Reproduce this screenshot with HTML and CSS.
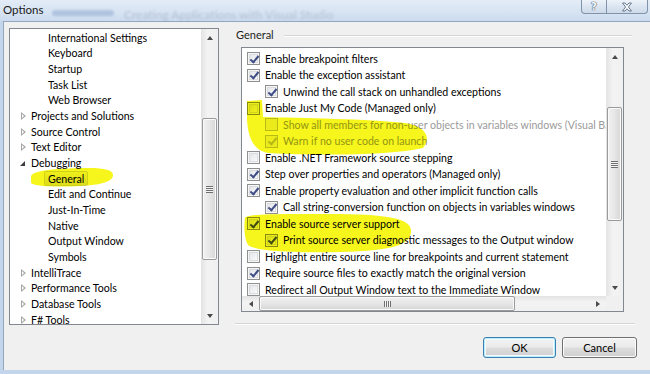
FILE: index.html
```html
<!DOCTYPE html>
<html>
<head>
<meta charset="utf-8">
<link rel="stylesheet" href="styles.css">
</head>
<body>
<div class="window">
  <div class="titlebar">
    <span class="title">Options</span>
    <span class="ghost ghost-icon"></span>
    <span class="ghost ghost-text">Creating Applications with Visual Studio</span>
    <div class="caption-btns">
      <div class="cap cap-help">?</div>
      <div class="cap cap-close">
        <svg width="12" height="10" viewBox="0 0 12 10"><path d="M1.5 1 H4 L6 3.2 L8 1 H10.5 L7.4 5 L10.5 9 H8 L6 6.8 L4 9 H1.5 L4.6 5 Z" fill="#fafcff" stroke="#5b6c82" stroke-width="0.9" stroke-linejoin="round"/></svg>
      </div>
    </div>
  </div>
  <div class="client">
    <div class="main">
      <div class="tree">
        <div class="tree-list">
          <div class="node l2">International Settings</div>
          <div class="node l2">Keyboard</div>
          <div class="node l2">Startup</div>
          <div class="node l2">Task List</div>
          <div class="node l2">Web Browser</div>
          <div class="node l1"><span class="exp closed"></span>Projects and Solutions</div>
          <div class="node l1"><span class="exp closed"></span>Source Control</div>
          <div class="node l1"><span class="exp closed"></span>Text Editor</div>
          <div class="node l1"><span class="exp open"></span>Debugging</div>
          <div class="node l2"><span class="sel">General</span></div>
          <div class="node l2">Edit and Continue</div>
          <div class="node l2">Just-In-Time</div>
          <div class="node l2">Native</div>
          <div class="node l2">Output Window</div>
          <div class="node l2">Symbols</div>
          <div class="node l1"><span class="exp closed"></span>IntelliTrace</div>
          <div class="node l1"><span class="exp closed"></span>Performance Tools</div>
          <div class="node l1"><span class="exp closed"></span>Database Tools</div>
          <div class="node l1"><span class="exp closed"></span>F# Tools</div>
        </div>
        <div class="vscroll">
          <div class="arrow-btn"><span class="tri up"></span></div>
          <div class="track"><div class="thumb tree-thumb"><span class="grip"></span></div></div>
          <div class="arrow-btn"><span class="tri down"></span></div>
        </div>
      </div>
      <div class="page">
        <div class="page-head"><span class="page-title">General</span><span class="page-rule"></span></div>
        <div class="optbox">
          <div class="opts">
            <div class="opt"><span class="cb on"></span>Enable breakpoint filters</div>
            <div class="opt"><span class="cb on"></span>Enable the exception assistant</div>
            <div class="opt sub"><span class="cb on"></span>Unwind the call stack on unhandled exceptions</div>
            <div class="opt"><span class="cb"></span>Enable Just My Code (Managed only)</div>
            <div class="opt sub dis"><span class="cb"></span>Show all members for non-user objects in variables windows (Visual Basic only)</div>
            <div class="opt sub dis"><span class="cb on"></span>Warn if no user code on launch</div>
            <div class="opt"><span class="cb"></span>Enable .NET Framework source stepping</div>
            <div class="opt"><span class="cb on"></span>Step over properties and operators (Managed only)</div>
            <div class="opt"><span class="cb on"></span>Enable property evaluation and other implicit function calls</div>
            <div class="opt sub"><span class="cb on"></span>Call string-conversion function on objects in variables windows</div>
            <div class="opt"><span class="cb on"></span>Enable source server support</div>
            <div class="opt sub"><span class="cb on"></span>Print source server diagnostic messages to the Output window</div>
            <div class="opt"><span class="cb"></span>Highlight entire source line for breakpoints and current statement</div>
            <div class="opt"><span class="cb on"></span>Require source files to exactly match the original version</div>
            <div class="opt"><span class="cb"></span>Redirect all Output Window text to the Immediate Window</div>
          </div>
          <div class="vscroll">
            <div class="arrow-btn"><span class="tri up"></span></div>
            <div class="track"><div class="thumb opt-thumb"><span class="grip"></span></div></div>
            <div class="arrow-btn"><span class="tri down"></span></div>
          </div>
          <div class="hscroll">
            <div class="arrow-btn h"><span class="tri left"></span></div>
            <div class="htrack"><div class="hthumb"><span class="hgrip"></span></div></div>
            <div class="arrow-btn h"><span class="tri right"></span></div>
          </div>
          <div class="corner"></div>
        </div>
        <div class="sep"></div>
      </div>
    </div>
    <div class="buttons">
      <div class="btn default">OK</div>
      <div class="btn cancel">Cancel</div>
    </div>
  </div>
</div>
<svg class="marker" width="650" height="374" viewBox="0 0 650 374">
  <path d="M31 176 C33 170 60 168 90 168 C104 168 113 170 113 175 C113 182 100 185 80 186 C60 187 36 187 31 183 Z" fill="#f6f61c"/>
  <path d="M247 101 L262 100 L263 117 C300 118 370 119 405 123 C428 127 431 139 423 148 C395 155 320 156 268 153 C252 150 248 135 247 120 Z" fill="#f6f61c"/>
  <path d="M245 218 C246 214 270 214 330 214 C385 214 410 218 411 230 C412 244 395 251 340 252 C290 253 255 251 248 245 C244 238 244 226 245 218 Z" fill="#f6f61c"/>
</svg>
</body>
</html>
```
FILE: styles.css
```css
* { box-sizing: border-box; }
html, body { margin: 0; padding: 0; }
body {
  width: 650px;
  height: 374px;
  overflow: hidden;
  background: #c3d5ea;
  font-family: Lato, "Noto Sans", sans-serif;
  font-size: 10.6px;
  color: #000;
}
.window { display: flex; flex-direction: column; height: 374px; }

.titlebar {
  position: relative;
  height: 21px;
  display: flex;
  align-items: flex-start;
  background: linear-gradient(to bottom, #e3ecf7 0%, #d6e3f2 60%, #cbdbee 100%);
}
.title { padding: 2px 0 0 3px; font-size: 11.5px; color: #1a1a1a; line-height: 16px; }
.ghost { position: absolute; filter: blur(1.3px); opacity: 0.3; }
.ghost-icon { left: 52px; top: 10px; width: 62px; height: 6px; background: #5a7fb6; border-radius: 3px; }
.ghost-text { left: 124px; top: 7px; font-size: 12px; color: #6a7788; white-space: nowrap; }
.caption-btns {
  margin-left: auto;
  margin-right: 2px;
  display: flex;
  height: 14px;
  border: 1px solid #8193ab;
  border-top: none;
  border-radius: 0 0 4px 4px;
  background: linear-gradient(to bottom, #eef3f9 0%, #dbe5f1 50%, #cfdbea 100%);
  overflow: hidden;
}
.cap { display: flex; align-items: center; justify-content: center; height: 13px; }
.cap-help {
  width: 25px;
  border-right: 1px solid #8193ab;
  font-size: 10px;
  font-weight: bold;
  color: #f8fbff;
  text-shadow: 0 0 1px #4b5c73, 0 0 1px #4b5c73, 0 0 1px #4b5c73;
  font-family: "DejaVu Sans", sans-serif;
}
.cap-close { width: 40px; }

.client {
  flex: 1;
  margin: 0 0 4px 3px;
  background: #f0f0f0;
  border-top: 1px solid #95a7be;
  border-left: 1px solid #95a7be;
  padding: 6px 13px 0 5px;
  display: flex;
  flex-direction: column;
}
.main { display: flex; gap: 17px; height: 297px; }

.tree {
  width: 210px;
  height: 297px;
  border: 1px solid #828790;
  background: #fff;
  display: flex;
}
.tree-list { flex: 1; padding-top: 1px; overflow: hidden; }
.node {
  height: 15.67px;
  display: flex;
  align-items: center;
  white-space: nowrap;
  color: #000;
}
.node.l1 { padding-left: 10px; }
.node.l2 { padding-left: 38px; }
.exp { width: 6px; height: 8px; margin-right: 5px; position: relative; }
.exp.closed {
  border-left: 4px solid transparent;
}
.exp.closed::before {
  content: "";
  position: absolute;
  left: -3px; top: 0;
  width: 0; height: 0;
  border-top: 4px solid transparent;
  border-bottom: 4px solid transparent;
  border-left: 5px solid #a6a6a6;
}
.exp.closed::after {
  content: "";
  position: absolute;
  left: -2px; top: 2px;
  width: 0; height: 0;
  border-top: 2px solid transparent;
  border-bottom: 2px solid transparent;
  border-left: 2.5px solid #fff;
}
.exp.open::before {
  content: "";
  position: absolute;
  left: 0; top: 2px;
  width: 0; height: 0;
  border-left: 5px solid transparent;
  border-bottom: 5px solid #3c3c3c;
}
.sel {
  margin-left: -4px;
  padding: 0 3px;
  height: 15px;
  line-height: 14px;
  border: 1px solid #d9d9d9;
  border-radius: 2px;
  background: linear-gradient(to bottom, #f8f8f8, #e5e5e5);
}

.vscroll {
  width: 17px;
  display: flex;
  flex-direction: column;
  background: linear-gradient(to right, #e3e3e3, #f3f3f3 40%, #f0f0f0);
}
.arrow-btn { height: 17px; display: flex; align-items: center; justify-content: center; }
.arrow-btn.h { width: 17px; height: 15px; }
.track { flex: 1; position: relative; }
.thumb {
  width: 15px;
  margin-left: 1px;
  border: 1px solid #9a9a9a;
  border-radius: 2px;
  background: linear-gradient(to right, #f1f1f1 0%, #e6e6e6 50%, #d6d6d6 100%);
  box-shadow: inset 0 0 0 1px #fafafa;
  display: flex;
  align-items: center;
  justify-content: center;
}
.tree-thumb { margin-top: 72px; height: 142px; }
.opt-thumb { margin-top: 42px; height: 114px; }
.grip {
  width: 7px;
  height: 7px;
  background: repeating-linear-gradient(to bottom, #6e6e6e 0 1px, #f6f6f6 1px 2px);
}
.tri { width: 0; height: 0; }
.tri.up { border-left: 3.5px solid transparent; border-right: 3.5px solid transparent; border-bottom: 4px solid #4a4a4a; }
.tri.down { border-left: 3.5px solid transparent; border-right: 3.5px solid transparent; border-top: 4px solid #4a4a4a; }
.tri.left { border-top: 3.5px solid transparent; border-bottom: 3.5px solid transparent; border-right: 4px solid #4a4a4a; }
.tri.right { border-top: 3.5px solid transparent; border-bottom: 3.5px solid transparent; border-left: 4px solid #4a4a4a; }

.page { flex: 1; display: flex; flex-direction: column; }
.page-head { height: 14px; display: flex; align-items: center; }
.page-title { color: #1e1e1e; margin-right: 10px; font-size: 11px; }
.page-rule { flex: 1; height: 2px; border-top: 1px solid #d5d5d5; border-bottom: 1px solid #fff; margin-right: 5px; margin-top: 2px; }
.optbox {
  margin: 6px 13px 0 5px;
  height: 265px;
  border: 1px solid #828790;
  background: #fff;
  display: grid;
  grid-template-columns: 1fr 17px;
  grid-template-rows: 1fr 15px;
}
.opts { overflow: hidden; padding-top: 2.5px; }
.opt {
  height: 16.5px;
  display: flex;
  align-items: center;
  white-space: nowrap;
  padding-left: 5px;
}
.opt.sub { padding-left: 23px; }
.opt.dis { color: #9a9a9a; }
.cb {
  flex: none;
  width: 13px;
  height: 13px;
  margin-right: 5px;
  border: 1px solid #8e8f8f;
  background: linear-gradient(135deg, #dcdfe3 0%, #f2f3f4 60%, #ffffff 100%);
  box-shadow: inset 0 0 0 1px #f6f6f6, inset 0 0 0 2px #d9dbde;
  position: relative;
}
.cb.on::after {
  content: "";
  position: absolute;
  left: 3.5px; top: 0.5px;
  width: 3px; height: 7px;
  border-right: 2px solid #3f4d86;
  border-bottom: 2px solid #3f4d86;
  transform: rotate(40deg);
}
.dis .cb { border-color: #c2c2c2; background: #f4f4f4; box-shadow: none; }
.dis .cb.on::after { border-color: #bdbdbd; }
.hscroll {
  display: flex;
  background: linear-gradient(to bottom, #e3e3e3, #f3f3f3 40%, #f0f0f0);
}
.htrack { flex: 1; }
.hthumb {
  width: 256px;
  height: 15px;
  border: 1px solid #9a9a9a;
  border-radius: 2px;
  background: linear-gradient(to bottom, #f1f1f1 0%, #e6e6e6 50%, #d6d6d6 100%);
  box-shadow: inset 0 0 0 1px #fafafa;
  display: flex;
  align-items: center;
  justify-content: center;
}
.hgrip {
  width: 7px;
  height: 6px;
  background: repeating-linear-gradient(to right, #6e6e6e 0 1px, #f6f6f6 1px 2px);
}
.corner { background: #f0f0f0; }
.sep { margin: 11px 2px 0 -1px; height: 2px; border-top: 1px solid #d5d5d5; border-bottom: 1px solid #fff; }

.buttons { margin-top: 12px; display: flex; justify-content: flex-end; gap: 6px; }
.btn {
  height: 21px;
  border: 1px solid #707070;
  border-radius: 3px;
  background: linear-gradient(to bottom, #f2f2f2 0%, #ebebeb 48%, #dddddd 52%, #cfcfcf 100%);
  box-shadow: inset 0 0 0 1px #fcfcfc;
  display: flex;
  align-items: center;
  justify-content: center;
  color: #000;
  font-size: 11px;
}
.btn.default { width: 73px; border-color: #3c7fb1; box-shadow: inset 0 0 0 1px #48d8fb55, inset 0 0 0 2px #f4f9fd; }
.btn.cancel { width: 75px; }

.marker { position: fixed; left: 0; top: 0; pointer-events: none; mix-blend-mode: multiply; }
```
